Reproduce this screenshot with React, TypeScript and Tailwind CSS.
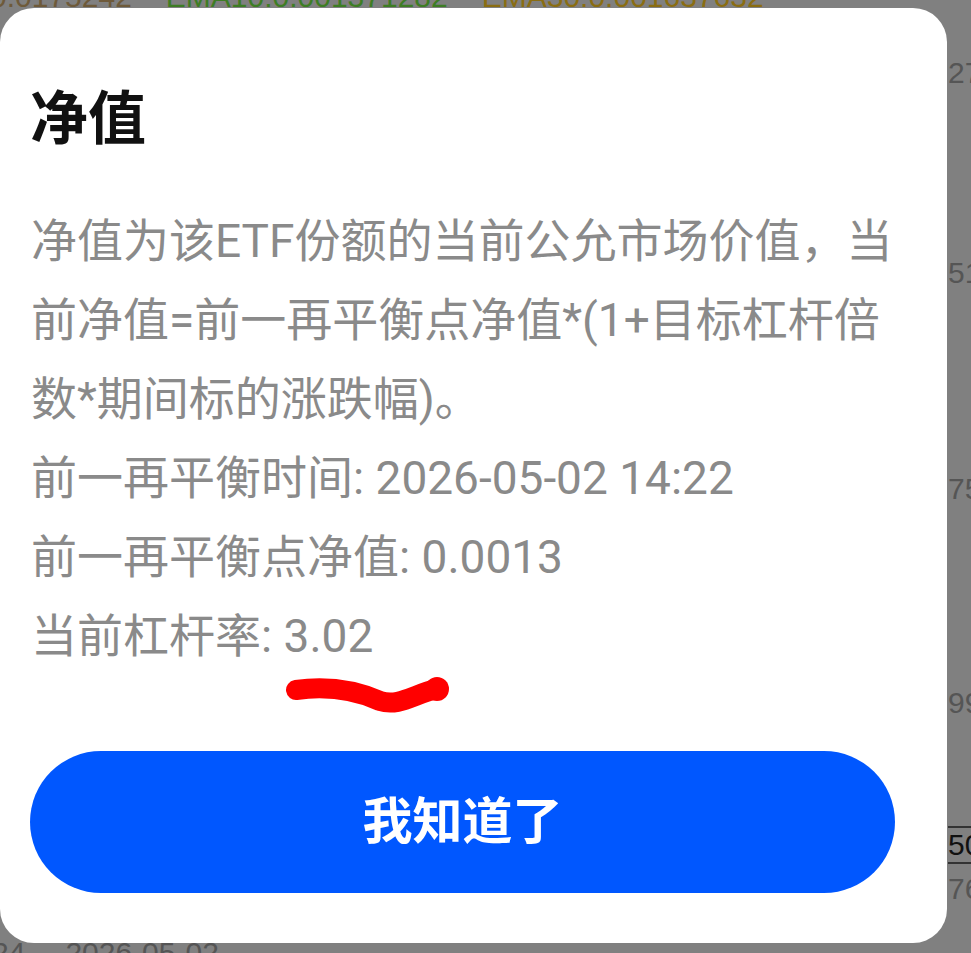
const sans = { fontFamily: '"Roboto", "Noto Sans CJK SC", sans-serif' };

function Backdrop() {
  // chart page behind the dimmed overlay
  return (
    <div className="absolute inset-0 overflow-hidden bg-[#808080] text-[30px] leading-none" style={{ fontFamily: '"Liberation Sans", sans-serif' }}>
      <div className="absolute -top-[18px] left-[-10px] flex gap-[34px] whitespace-nowrap">
        <span className="text-[#6e5a3a]">0.0175242</span>
        <span className="text-[#3d7d24]">EMA10:0.001371282</span>
        <span className="text-[#8a6d12]">EMA30:0.001637632</span>
      </div>
      <div className="absolute left-[948px] top-0 flex h-full w-[40px] flex-col text-[#555]">
        <span className="mt-[58px]">27</span>
        <span className="mt-[170px]">51</span>
        <span className="mt-[186px]">75</span>
        <span className="mt-[184px]">99</span>
        <span className="mt-[108px] border-y-2 border-[#333] py-[2px] text-[#111]">50</span>
        <span className="mt-[10px]">76</span>
      </div>
      <div className="absolute left-[-8px] top-[938px] flex gap-[40px] whitespace-nowrap text-[#555]">
        <span>24</span>
        <span>2026-05-02</span>
      </div>
    </div>
  );
}

export default function App() {
  return (
    <div className="relative h-[953px] w-[971px] overflow-hidden" style={sans}>
      <Backdrop />
      <div className="absolute left-0 top-[8px] flex h-[935px] w-[947px] flex-col rounded-[34px] bg-white pt-[82px]">
        <h1 className="pl-[30px] text-[58px] font-bold leading-[58px] text-[#111]">净值</h1>
        <p className="mt-[54px] whitespace-nowrap pl-[31px] text-[46px] leading-[79px] text-[#8a8a8a]">
          净值为该ETF份额的当前公允市场价值，当
          <br />
          前净值=前一再平衡点净值*(1+目标杠杆倍
          <br />
          数*期间标的涨跌幅)。
          <br />
          前一再平衡时间: 2026-05-02 14:22
          <br />
          前一再平衡点净值: 0.0013
          <br />
          当前杠杆率: 3.02
        </p>
        <svg className="ml-[285px] block h-[40px] w-[170px]" viewBox="0 0 170 40">
          <path d="M11 14 C40 10 70 14 95 25 C113 31 128 19 151 13" fill="none" stroke="#ff0000" strokeWidth="20" strokeLinecap="round" />
          <circle cx="152" cy="13" r="12" fill="#ff0000" />
        </svg>
        <button className="ml-[30px] mt-[35px] flex h-[142px] w-[865px] items-center justify-center rounded-full bg-[#0057ff] text-[50px] font-bold text-white">
          我知道了
        </button>
      </div>
    </div>
  );
}
